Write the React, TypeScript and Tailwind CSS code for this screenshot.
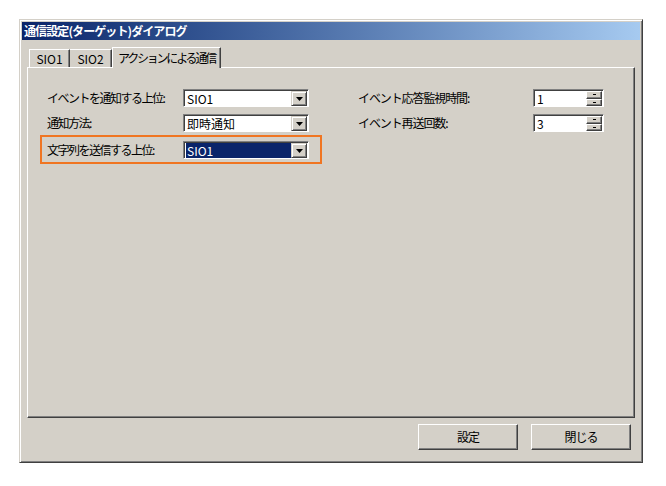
const font = "font-['MS_UI_Gothic','Noto_Sans_CJK_JP',sans-serif]"

function Combo({ value, selected }: { value: string; selected?: boolean }) {
  return (
    <div className="flex h-[18px] w-[126px] border border-t-[#808080] border-l-[#808080] border-r-white border-b-white bg-white shadow-[inset_1px_1px_0_#404040]">
      <div className="flex flex-1 items-center pl-[2px] pt-[1px]">
        <span
          className={
            selected
              ? 'flex h-full flex-1 items-center bg-[#0a246a] pl-[1px] text-white'
              : 'flex h-full flex-1 items-center pl-[1px] text-black'
          }
        >
          {value}
        </span>
      </div>
      <div className="mt-[1px] mr-[1px] flex w-[16px] items-center justify-center border border-t-[#d4d0c8] border-l-[#d4d0c8] border-r-[#404040] border-b-[#404040] bg-[#d4d0c8] shadow-[inset_1px_1px_0_white,inset_-1px_-1px_0_#808080]">
        <svg width="7" height="4" viewBox="0 0 7 4">
          <path d="M0 0h7L3.5 4z" fill="black" />
        </svg>
      </div>
    </div>
  )
}

function Spin({ value }: { value: string }) {
  return (
    <div className="flex h-[18px] w-[71px] border border-t-[#808080] border-l-[#808080] border-r-white border-b-white bg-white shadow-[inset_1px_1px_0_#404040]">
      <div className="flex flex-1 items-center pl-[3px] pt-[1px]">{value}</div>
      <div className="mt-[1px] mr-[1px] flex w-[16px] flex-col">
        {[0, 1].map((i) => (
          <div
            key={i}
            className="flex flex-1 items-center justify-center border border-t-white border-l-white border-r-[#404040] border-b-[#404040] bg-[#d4d0c8] shadow-[inset_-1px_-1px_0_#808080]"
          >
            <div className="h-[1px] w-[3px] bg-black" />
          </div>
        ))}
      </div>
    </div>
  )
}

function Button({ label }: { label: string }) {
  return (
    <div className="flex h-[26px] w-[100px] items-center justify-center border border-t-white border-l-white border-r-[#404040] border-b-[#404040] bg-[#d4d0c8] tracking-[-1px] shadow-[inset_-1px_-1px_0_#808080]">
      {label}
    </div>
  )
}

export default function App() {
  return (
    <div className={`${font} min-h-[486px] bg-white pt-[19px] pl-[19px] text-[12px] leading-none text-black`}>
      <div className="flex h-[444px] w-[624px] flex-col border border-t-[#d4d0c8] border-l-[#d4d0c8] border-r-[#404040] border-b-[#404040] bg-[#d4d0c8] p-[1px] shadow-[inset_1px_1px_0_white,inset_-1px_-1px_0_#808080]">
        <div className="mx-[1px] mt-[1px] flex h-[18px] items-center bg-gradient-to-r from-[#0a246a] to-[#a6caf0] pl-[2px] font-bold tracking-[-0.9px] text-white">
          通信設定(ターゲット)ダイアログ
        </div>

        <div className="flex flex-1 flex-col px-[6px] pt-[7px]">
          {/* tabs */}
          <div className="flex h-[20px] items-end pl-[2px]">
            <div className="flex h-[18px] w-[41px] items-center justify-center border-t border-l border-r border-t-white border-l-white border-r-[#404040] shadow-[inset_-1px_0_0_#808080]">
              SIO1
            </div>
            <div className="flex h-[18px] w-[42px] items-center justify-center border-t border-r border-t-white border-r-[#404040] shadow-[inset_-1px_0_0_#808080]">
              SIO2
            </div>
            <div className="relative z-10 -mb-[1px] flex h-[21px] w-[109px] items-center justify-center border-t border-l border-r border-t-white border-l-white border-r-[#404040] bg-[#d4d0c8] tracking-[-2.2px] shadow-[inset_-1px_0_0_#808080]">
              アクションによる通信
            </div>
          </div>

          {/* panel */}
          <div className="flex h-[351px] border border-t-white border-l-white border-r-[#404040] border-b-[#404040] pt-[21px] pl-[12px] shadow-[inset_-1px_-1px_0_#808080]">
            <div className="flex w-[282px] flex-col">
              <div className="flex h-[18px] items-center pl-[7px]">
                <span className="w-[136px] tracking-[-1.5px]">イベントを通知する上位:</span>
                <Combo value="SIO1" />
              </div>
              <div className="mt-[7px] flex h-[18px] items-center pl-[7px]">
                <span className="w-[136px] tracking-[-1.5px]">通知方法:</span>
                <Combo value="即時通知" />
              </div>
              <div className="mt-[3px] flex items-center border-2 border-[#f07522] pt-[4px] pb-[3px] pl-[5px]">
                <span className="w-[136px] tracking-[-1.5px]">文字列を送信する上位:</span>
                <Combo value="SIO1" selected />
              </div>
            </div>
            <div className="ml-[36px] flex flex-col">
              <div className="flex h-[18px] items-center">
                <span className="w-[175px] tracking-[-1.1px]">イベント応答監視時間:</span>
                <Spin value="1" />
              </div>
              <div className="mt-[7px] flex h-[18px] items-center">
                <span className="w-[175px] tracking-[-1.1px]">イベント再送回数:</span>
                <Spin value="3" />
              </div>
            </div>
          </div>

          {/* buttons */}
          <div className="mt-[6px] flex justify-end gap-[13px] pr-[4px]">
            <Button label="設定" />
            <Button label="閉じる" />
          </div>
        </div>
      </div>
    </div>
  )
}
